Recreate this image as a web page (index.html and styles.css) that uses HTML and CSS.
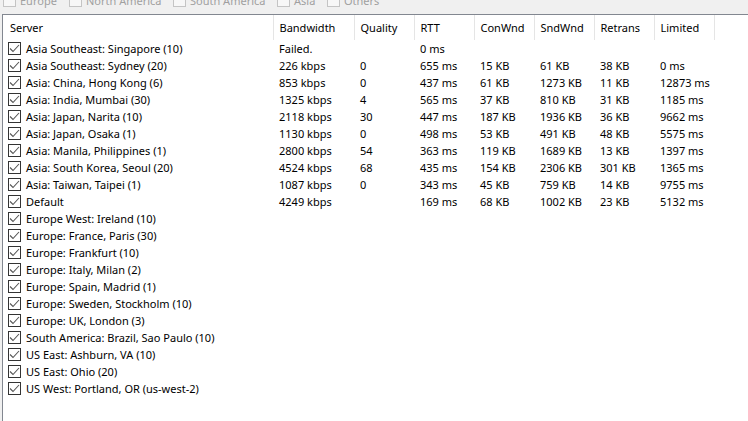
FILE: index.html
```html
<!DOCTYPE html>
<html lang="en">
<head>
    <meta charset="UTF-8">
    <title>Servers</title>
    <link rel="stylesheet" href="styles.css">
</head>
<body>
    <div class="filters">
        <label class="filter f-europe"><span class="fbox"></span>Europe</label>
        <label class="filter f-na"><span class="fbox"></span>North America</label>
        <label class="filter f-sa"><span class="fbox"></span>South America</label>
        <label class="filter f-asia"><span class="fbox"></span>Asia</label>
        <label class="filter f-others"><span class="fbox"></span>Others</label>
    </div>

    <div class="list">
        <table class="servers">
            <colgroup>
                <col class="c-server">
                <col class="c-bw">
                <col class="c-small">
                <col class="c-small">
                <col class="c-small">
                <col class="c-small">
                <col class="c-small">
                <col class="c-small">
                <col>
            </colgroup>
            <thead>
                <tr>
                    <th>Server</th>
                    <th>Bandwidth</th>
                    <th>Quality</th>
                    <th>RTT</th>
                    <th>ConWnd</th>
                    <th>SndWnd</th>
                    <th>Retrans</th>
                    <th>Limited</th>
                    <th class="filler"></th>
                </tr>
            </thead>
            <tbody id="rows"></tbody>
        </table>
    </div>

    <script>
        // server, bandwidth, quality, rtt, conwnd, sndwnd, retrans, limited
        const servers = [
            ['Asia Southeast: Singapore (10)', 'Failed.', '', '0 ms', '', '', '', ''],
            ['Asia Southeast: Sydney (20)', '226 kbps', '0', '655 ms', '15 KB', '61 KB', '38 KB', '0 ms'],
            ['Asia: China, Hong Kong (6)', '853 kbps', '0', '437 ms', '61 KB', '1273 KB', '11 KB', '12873 ms'],
            ['Asia: India, Mumbai (30)', '1325 kbps', '4', '565 ms', '37 KB', '810 KB', '31 KB', '1185 ms'],
            ['Asia: Japan, Narita (10)', '2118 kbps', '30', '447 ms', '187 KB', '1936 KB', '36 KB', '9662 ms'],
            ['Asia: Japan, Osaka (1)', '1130 kbps', '0', '498 ms', '53 KB', '491 KB', '48 KB', '5575 ms'],
            ['Asia: Manila, Philippines (1)', '2800 kbps', '54', '363 ms', '119 KB', '1689 KB', '13 KB', '1397 ms'],
            ['Asia: South Korea, Seoul (20)', '4524 kbps', '68', '435 ms', '154 KB', '2306 KB', '301 KB', '1365 ms'],
            ['Asia: Taiwan, Taipei (1)', '1087 kbps', '0', '343 ms', '45 KB', '759 KB', '14 KB', '9755 ms'],
            ['Default', '4249 kbps', '', '169 ms', '68 KB', '1002 KB', '23 KB', '5132 ms'],
            ['Europe West: Ireland (10)'],
            ['Europe: France, Paris (30)'],
            ['Europe: Frankfurt (10)'],
            ['Europe: Italy, Milan (2)'],
            ['Europe: Spain, Madrid (1)'],
            ['Europe: Sweden, Stockholm (10)'],
            ['Europe: UK, London (3)'],
            ['South America: Brazil, Sao Paulo (10)'],
            ['US East: Ashburn, VA (10)'],
            ['US East: Ohio (20)'],
            ['US West: Portland, OR (us-west-2)']
        ];

        const check = '<svg class="check" width="13" height="13" viewBox="0 0 13 13">' +
            '<rect x="0.5" y="0.5" width="12" height="12" fill="#fff" stroke="#333"/>' +
            '<polyline points="2,6.5 5,9.5 11,3" fill="none" stroke="#555" stroke-width="1.1"/></svg>';

        const tbody = document.getElementById('rows');
        servers.forEach(s => {
            const tr = document.createElement('tr');
            let html = '<td><span class="name">' + check + s[0] + '</span></td>';
            for (let i = 1; i < 8; i++) {
                html += '<td>' + (s[i] || '') + '</td>';
            }
            html += '<td></td>';
            tr.innerHTML = html;
            tbody.appendChild(tr);
        });
    </script>
</body>
</html>
```

FILE: styles.css
```css
* {
    margin: 0;
    padding: 0;
    box-sizing: border-box;
}

body {
    background: #f0f0f0;
    color: #000;
    font-family: "Segoe UI", "Noto Sans", sans-serif;
    font-size: 11px;
    overflow: hidden;
    height: 421px;
}

/* Region filter strip (mostly scrolled out of view) */
.filters {
    height: 14px;
    overflow: hidden;
    display: flex;
    align-items: flex-start;
    padding-left: 3px;
}

.filter {
    display: flex;
    align-items: center;
    gap: 4px;
    margin-top: -8px;
    height: 17px;
    color: #a0a0a0;
    white-space: nowrap;
    flex: none;
}

.fbox {
    width: 13px;
    height: 13px;
    border: 1px solid #c4c4c4;
    background: #f7f7f7;
}

.f-europe { width: 66px; }
.f-na { width: 104px; }
.f-sa { width: 104px; }
.f-asia { width: 50px; }

/* List view */
.list {
    margin-left: 2px;
    height: 407px;
    background: #fff;
    border-top: 1px solid #828790;
    border-left: 1px solid #828790;
}

.servers {
    border-collapse: collapse;
    table-layout: fixed;
    width: 100%;
}

.c-server { width: 270px; }
.c-bw { width: 81px; }
.c-small { width: 60px; }

.servers th {
    height: 25px;
    font-weight: normal;
    text-align: left;
    padding: 0 0 1px 6px;
    border-right: 1px solid #e5e5e5;
    white-space: nowrap;
    background: #fff;
}

.servers th:first-child {
    padding-left: 7px;
}

.servers th.filler {
    border-right: none;
}

.servers td {
    height: 17px;
    padding: 0 0 0 6px;
    white-space: nowrap;
    overflow: hidden;
    line-height: 17px;
}

.servers td:first-child {
    padding-left: 5px;
}

.name {
    display: flex;
    align-items: center;
    gap: 5px;
}

.check {
    flex: none;
}
```
